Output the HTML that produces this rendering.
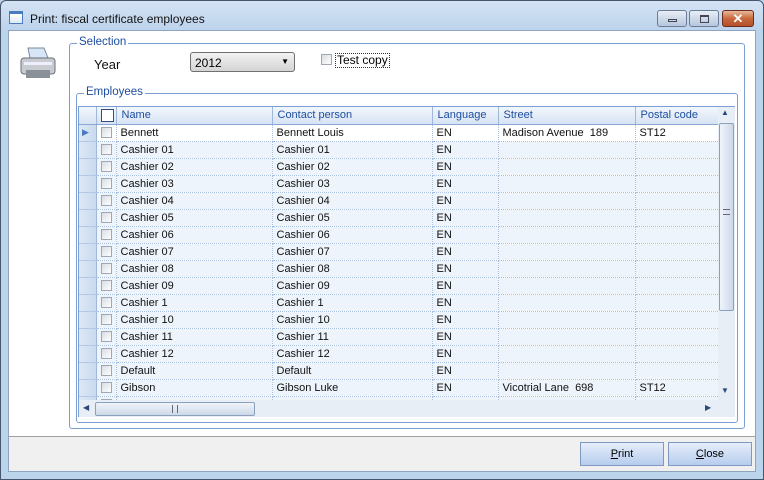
<!DOCTYPE html><html><head><style>
*{margin:0;padding:0;box-sizing:border-box}
body{width:764px;height:480px;overflow:hidden;font-family:"Liberation Sans",sans-serif;font-size:12px;background:#bcd3ec;position:relative}
.a{position:absolute}
.frame{left:0;top:0;width:764px;height:480px;border:1px solid #45566a;border-radius:6px 6px 0 0;background:linear-gradient(#d4e3f4,#bcd3ec 30px,#bcd3ec)}
.client{left:8px;top:30px;width:748px;height:442px;background:#fff;border:1px solid #8ea4bf}
.bottom{left:9px;top:436px;width:746px;height:35px;background:#f0f0f0;border-top:1px solid #a0a0a0}
.btn{top:442px;width:84px;height:24px;border:1px solid #7f99c0;background:linear-gradient(#e6eefa,#b6cdee);text-align:center;line-height:22px;font-size:11px}
.grp{border:1px solid #7c9fd3;border-radius:3px}
.lg{background:#fff;color:#1e4ea0;padding:0 2px;font-size:11.5px}
table{border-collapse:collapse;table-layout:fixed}
td{height:17px;font-size:11px;padding:0 0 0 4px;border-right:1px dotted #a8c0e0;border-bottom:1px dotted #a8c0e0;white-space:nowrap;overflow:hidden;color:#111;background:#eef4fc}
td.rh{background:linear-gradient(90deg,#dde8f5,#c9daef);border-right:1px solid #9fb8da;border-bottom:1px solid #b4c8e4}
td.cb{padding-left:4px}
.chk{display:inline-block;width:11px;height:11px;border:1px solid #a0a8b4;background:linear-gradient(135deg,#d8dce2,#fff);vertical-align:middle}
th{height:17px;font-weight:normal;text-align:left;padding-left:5px;color:#1e4ea0;background:linear-gradient(#f3f7fc,#d6e3f4);border-right:1px solid #9fb8da;border-bottom:1px solid #8aa8d6;font-size:11px}
</style></head><body>
<div class="a frame"></div>
<div class="a" style="left:9px;top:11px;width:14px;height:13px;border:1px solid #4a7bbf;background:linear-gradient(#fff,#dde8f6);border-top-width:3px"></div>
<div class="a" style="left:30px;top:12px;font-size:12px;color:#111">Print: fiscal certificate employees</div>
<div class="a" style="left:657px;top:10px;width:30px;height:17px;border:1px solid #6b7d96;border-radius:3px;background:linear-gradient(#e8eef6,#b6c6dc)"><div class="a" style="left:10px;top:8px;width:9px;height:3px;border:1px solid #445"></div></div>
<div class="a" style="left:689px;top:10px;width:30px;height:17px;border:1px solid #6b7d96;border-radius:3px;background:linear-gradient(#e8eef6,#b6c6dc)"><div class="a" style="left:10px;top:4px;width:9px;height:8px;border:1px solid #445;border-top-width:2px"></div></div>
<div class="a" style="left:722px;top:10px;width:32px;height:17px;border:1px solid #6e2a1a;border-radius:3px;background:linear-gradient(#e8b89a,#c8683e 50%,#b4502a);color:#fff;font-weight:bold;text-align:center;line-height:15px;font-size:13px">✕</div>
<div class="a client"></div>
<svg class="a" style="left:18px;top:44px" width="40" height="40"><path d="M10 4 L26 4 L30 14 L12 14Z" fill="#d6e6f6" stroke="#7a8a9a"/><rect x="3" y="14" width="34" height="16" rx="3" fill="#c8ccd0" stroke="#6a7078"/><rect x="8" y="26" width="24" height="8" fill="#8a9098"/><rect x="6" y="18" width="28" height="3" fill="#eef"/></svg>
<div class="a grp" style="left:69px;top:43px;width:676px;height:386px"></div>
<div class="a lg" style="left:77px;top:36px">Selection</div>
<div class="a" style="left:94px;top:57px;font-size:13px;color:#111">Year</div>
<div class="a" style="left:190px;top:52px;width:105px;height:20px;border:1px solid #707070;border-radius:3px;background:linear-gradient(#f2f2f2,#d4d4d4);padding:3px 4px;font-size:12px">2012<span class="a" style="right:5px;top:4px;font-size:8px">▼</span></div>
<div class="a chk" style="left:321px;top:54px"></div>
<div class="a" style="left:335px;top:53px;border:1px dotted #333;padding:0 1px;font-size:12px;line-height:13px">Test copy</div>
<div class="a grp" style="left:76px;top:93px;width:662px;height:330px"></div>
<div class="a lg" style="left:84px;top:86px">Employees</div>
<div class="a" style="left:78px;top:106px;width:640px;height:294px;overflow:hidden;background:#fff;border-left:1px solid #7c9fd3;border-top:1px solid #7c9fd3">
<table style="width:640px"><colgroup><col style="width:17px"><col style="width:20px"><col style="width:156px"><col style="width:160px"><col style="width:66px"><col style="width:137px"><col style="width:84px"></colgroup>
<tr><th style="padding:0"></th><th style="padding-left:4px"><span class="chk" style="border-color:#3a4a7a;width:13px;height:13px;background:#fff"></span></th><th>Name</th><th>Contact person</th><th>Language</th><th>Street</th><th>Postal code</th></tr>
<tr><td class="rh" style="color:#4a7bbf;font-size:9px;padding-left:3px">▶</td><td class="cb" style="background:#fff"><span class="chk"></span></td><td style="background:#fff">Bennett</td><td style="background:#fff">Bennett Louis</td><td style="background:#fff">EN</td><td style="background:#fff">Madison Avenue &nbsp;189</td><td style="background:#fff">ST12</td></tr>
<tr><td class="rh"></td><td class="cb"><span class="chk"></span></td><td>Cashier 01</td><td>Cashier 01</td><td>EN</td><td></td><td></td></tr>
<tr><td class="rh"></td><td class="cb"><span class="chk"></span></td><td>Cashier 02</td><td>Cashier 02</td><td>EN</td><td></td><td></td></tr>
<tr><td class="rh"></td><td class="cb"><span class="chk"></span></td><td>Cashier 03</td><td>Cashier 03</td><td>EN</td><td></td><td></td></tr>
<tr><td class="rh"></td><td class="cb"><span class="chk"></span></td><td>Cashier 04</td><td>Cashier 04</td><td>EN</td><td></td><td></td></tr>
<tr><td class="rh"></td><td class="cb"><span class="chk"></span></td><td>Cashier 05</td><td>Cashier 05</td><td>EN</td><td></td><td></td></tr>
<tr><td class="rh"></td><td class="cb"><span class="chk"></span></td><td>Cashier 06</td><td>Cashier 06</td><td>EN</td><td></td><td></td></tr>
<tr><td class="rh"></td><td class="cb"><span class="chk"></span></td><td>Cashier 07</td><td>Cashier 07</td><td>EN</td><td></td><td></td></tr>
<tr><td class="rh"></td><td class="cb"><span class="chk"></span></td><td>Cashier 08</td><td>Cashier 08</td><td>EN</td><td></td><td></td></tr>
<tr><td class="rh"></td><td class="cb"><span class="chk"></span></td><td>Cashier 09</td><td>Cashier 09</td><td>EN</td><td></td><td></td></tr>
<tr><td class="rh"></td><td class="cb"><span class="chk"></span></td><td>Cashier 1</td><td>Cashier 1</td><td>EN</td><td></td><td></td></tr>
<tr><td class="rh"></td><td class="cb"><span class="chk"></span></td><td>Cashier 10</td><td>Cashier 10</td><td>EN</td><td></td><td></td></tr>
<tr><td class="rh"></td><td class="cb"><span class="chk"></span></td><td>Cashier 11</td><td>Cashier 11</td><td>EN</td><td></td><td></td></tr>
<tr><td class="rh"></td><td class="cb"><span class="chk"></span></td><td>Cashier 12</td><td>Cashier 12</td><td>EN</td><td></td><td></td></tr>
<tr><td class="rh"></td><td class="cb"><span class="chk"></span></td><td>Default</td><td>Default</td><td>EN</td><td></td><td></td></tr>
<tr><td class="rh"></td><td class="cb"><span class="chk"></span></td><td>Gibson</td><td>Gibson Luke</td><td>EN</td><td>Vicotrial Lane &nbsp;698</td><td>ST12</td></tr>
<tr><td class="rh"></td><td class="cb"><span class="chk"></span></td><td>Hunter</td><td>Hunter Peter</td><td>EN</td><td>Albert Street &nbsp;52</td><td>ST12</td></tr>
</table></div>
<div class="a" style="left:718px;top:106px;width:17px;height:294px;background:#e8eef6;border-top:1px solid #7c9fd3"></div>
<div class="a" style="left:721px;top:108px;font-size:8px;color:#2a4a7a">▲</div>
<div class="a" style="left:719px;top:123px;width:15px;height:188px;border:1px solid #8aa0bc;border-radius:2px;background:linear-gradient(90deg,#f0f4fa,#cdd9e8)"></div>
<div class="a" style="left:723px;top:209px;width:7px;height:6px;border-top:1px solid #667;border-bottom:1px solid #667"></div>
<div class="a" style="left:721px;top:386px;font-size:8px;color:#2a4a7a">▼</div>
<div class="a" style="left:78px;top:400px;width:657px;height:17px;background:#e8eef6;border-left:1px solid #7c9fd3"></div>
<div class="a" style="left:83px;top:403px;font-size:8px;color:#2a4a7a">◀</div>
<div class="a" style="left:95px;top:402px;width:160px;height:14px;border:1px solid #8aa0bc;border-radius:2px;background:linear-gradient(#f0f4fa,#cdd9e8)"></div>
<div class="a" style="left:172px;top:405px;width:6px;height:8px;border-left:1px solid #667;border-right:1px solid #667"></div>
<div class="a" style="left:705px;top:403px;font-size:8px;color:#2a4a7a">▶</div>
<div class="a bottom"></div>
<div class="a btn" style="left:580px"><u>P</u>rint</div>
<div class="a btn" style="left:668px"><u>C</u>lose</div>
</body></html>
